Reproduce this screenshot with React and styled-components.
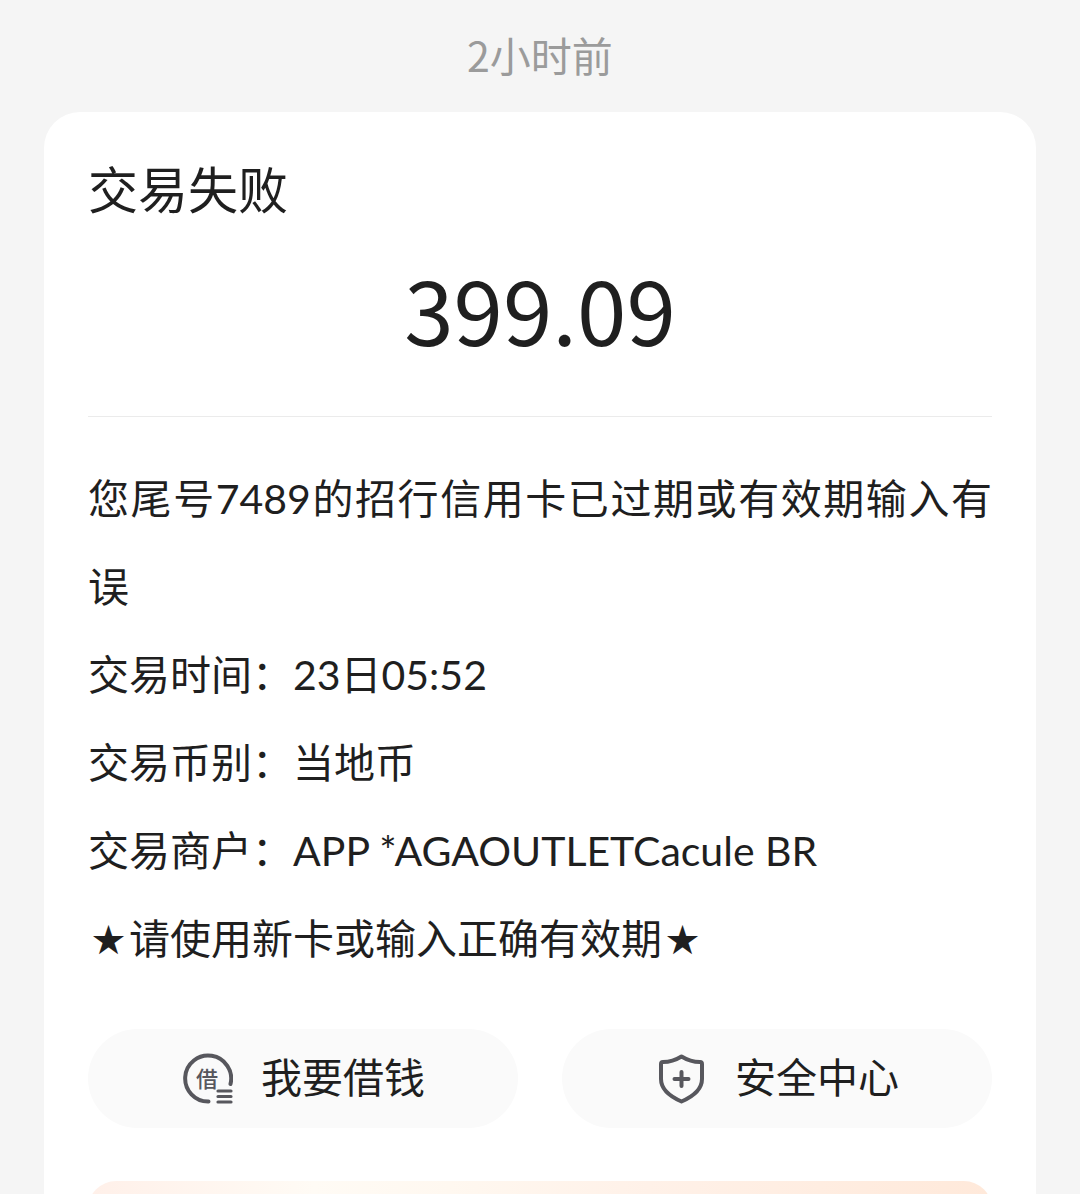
import React from 'react';
import styled, { createGlobalStyle } from 'styled-components';

const GlobalStyle = createGlobalStyle`
    * {
        box-sizing: border-box;
    }

    body {
        margin: 0;
        background-color: #f5f5f5;
        color: #1f1f1f;
        font-family: Lato, "Noto Sans CJK SC", sans-serif;
    }

    #root {
        overflow: hidden;
        height: 100vh;
    }
`

const Page = styled.main`
    padding: 24px 44px 0;
`

const Time = styled.time`
    display: block;
    height: 88px;
    line-height: 60px;
    font-family: "Noto Sans CJK SC", sans-serif;
    font-size: 41px;
    text-align: center;
    color: #9b9b9b;
`

const Card = styled.article`
    padding: 40px 44px;
    border-radius: 36px;
    background-color: white;
`

const Title = styled.h1`
    margin: 0;
    font-size: 50px;
    font-weight: 400;
    line-height: 76px;
`

const Amount = styled.p`
    margin: 0;
    padding: 18px 0 46px;
    font-family: "Noto Sans CJK SC", sans-serif;
    font-size: 89px;
    line-height: 124px;
    text-align: center;
    border-bottom: 1px solid #ebebeb;
`

const Details = styled.div`
    padding: 38px 0 46px;
    font-size: 41px;
    line-height: 88px;
`

const Line = styled.p`
    margin: 0;
    text-align: justify;
`

const Star = styled.span`
    display: inline-block;
    width: 41px;
    font-size: 33px;
    line-height: 1;
    text-align: center;
    vertical-align: 2px;
`

const Actions = styled.div`
    display: grid;
    grid-template-columns: 1fr 1fr;
    gap: 44px;
`

const ActionButton = styled.button`
    display: flex;
    align-items: center;
    justify-content: center;
    gap: 28px;
    height: 99px;
    border: 0;
    border-radius: 50px;
    background-color: #fafafa;
    color: inherit;
    font: inherit;
    font-size: 41px;
`

const Label = styled.span`
    padding-bottom: 8px;
`

const Icon = styled.svg`
    width: 52px;
    height: 52px;
    flex: none;
    fill: none;
    stroke: #57575d;
    stroke-width: 4;
    stroke-linecap: round;
    stroke-linejoin: round;
`

const IconText = styled.text`
    fill: #57575d;
    stroke: none;
    font-family: "Noto Sans CJK SC", sans-serif;
    font-size: 22px;
    font-weight: 500;
    text-anchor: middle;
`

const Banner = styled.div`
    height: 120px;
    margin-top: 53px;
    border-radius: 28px;
    background: linear-gradient(90deg, #fff0e9, #fffbf5 25%, #fff8f0 40%, #fff1e8 62%, #ffe9da);
`

const LoanIcon = () => (
    <Icon viewBox="0 0 52 52" aria-hidden="true">
        <path d="M27.5 48.5A23 23 0 1 1 49.5 31" />
        <IconText x="26" y="34">借</IconText>
        <path d="M37 38H50M37 43.5H50M37 49H50" strokeWidth="3.2" />
    </Icon>
);

const ShieldIcon = () => (
    <Icon viewBox="0 0 52 52" aria-hidden="true">
        <path d="M26.5 3.5C20 7.5 14 9 8 9Q6 9 6 11V26C6 37 15 43.5 26.5 48.5C38 43.5 47 37 47 26V11Q47 9 45 9C39 9 33 7.5 26.5 3.5Z" />
        <path d="M26.5 19V33M19.5 26H33.5" />
    </Icon>
);

const App = () => {
    return (
        <>
            <GlobalStyle />
            <Page>
                <Time>2小时前</Time>
                <Card>
                    <Title>交易失败</Title>
                    <Amount>399.09</Amount>
                    <Details>
                        <Line>您尾号7489的招行信用卡已过期或有效期输入有误</Line>
                        <Line>交易时间：23日05:52</Line>
                        <Line>交易币别：当地币</Line>
                        <Line>交易商户：APP *AGAOUTLETCacule BR</Line>
                        <Line><Star>★</Star>请使用新卡或输入正确有效期<Star>★</Star></Line>
                    </Details>
                    <Actions>
                        <ActionButton type="button">
                            <LoanIcon />
                            <Label>我要借钱</Label>
                        </ActionButton>
                        <ActionButton type="button">
                            <ShieldIcon />
                            <Label>安全中心</Label>
                        </ActionButton>
                    </Actions>
                    <Banner />
                </Card>
            </Page>
        </>
    );
};

export default App;
